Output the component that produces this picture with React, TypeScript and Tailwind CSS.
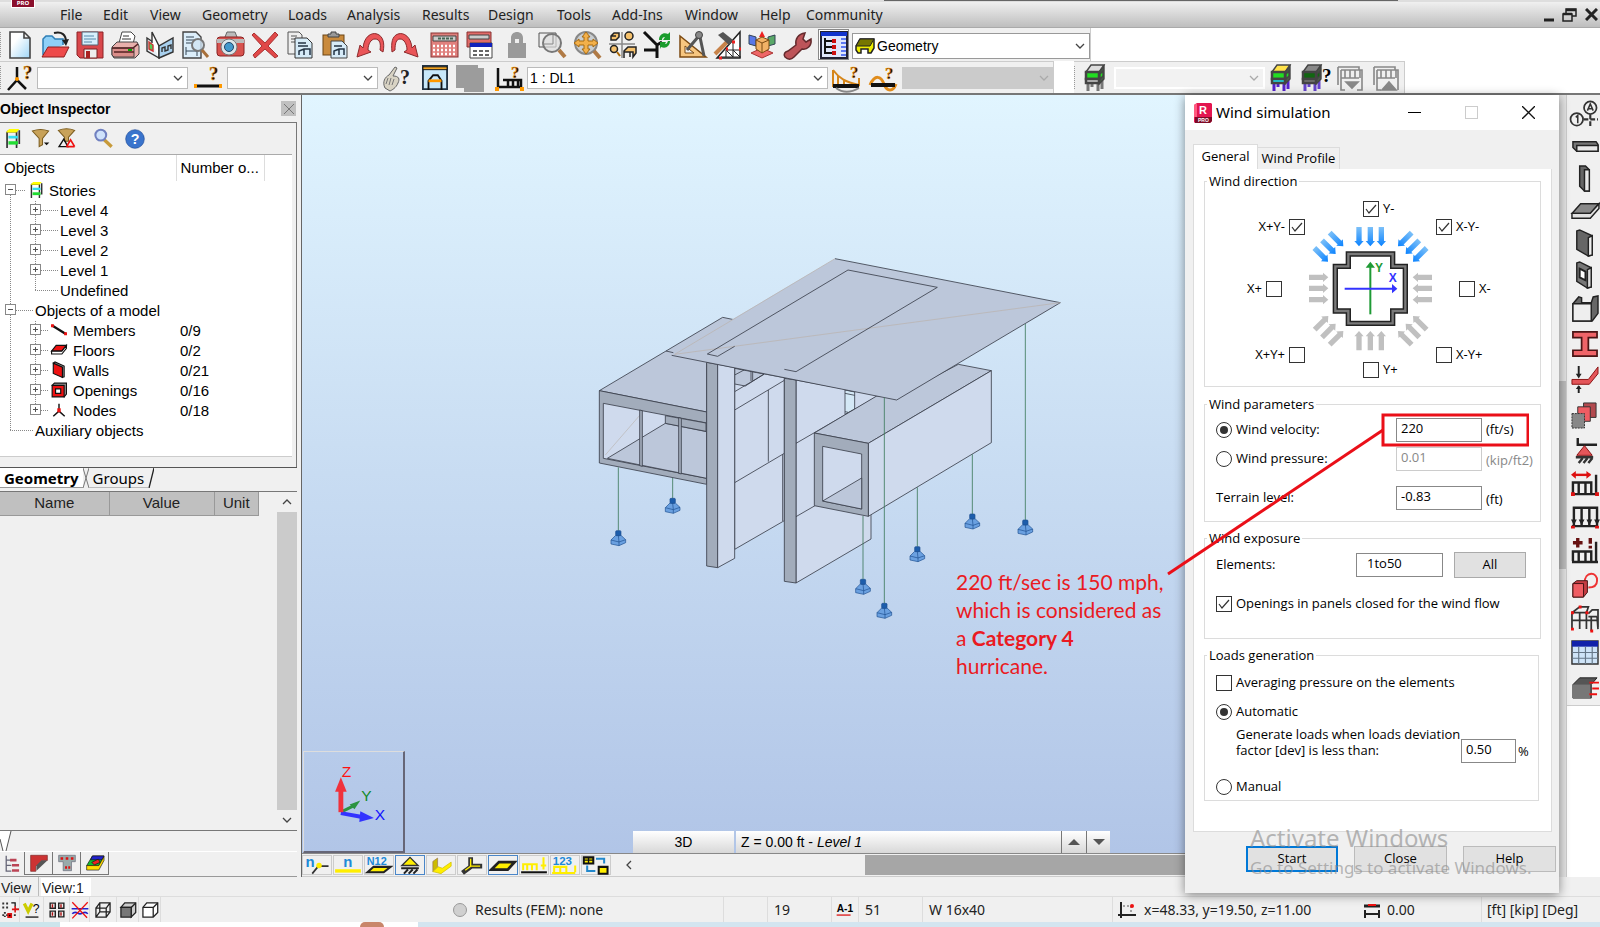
import React from "react";

// ==========================================
// DATA
// ==========================================
const menus = [
    { label: "File", width: "w-[43px]" },
    { label: "Edit", width: "w-[47px]" },
    { label: "View", width: "w-[52px]" },
    { label: "Geometry", width: "w-[86px]" },
    { label: "Loads", width: "w-[59px]" },
    { label: "Analysis", width: "w-[75px]" },
    { label: "Results", width: "w-[66px]" },
    { label: "Design", width: "w-[69px]" },
    { label: "Tools", width: "w-[55px]" },
    { label: "Add-Ins", width: "w-[73px]" },
    { label: "Window", width: "w-[75px]" },
    { label: "Help", width: "w-[46px]" },
    { label: "Community", width: "w-[90px]" },
];

type Row = { label: string; level: number; box?: "+" | "-"; icon?: string; count?: string; last?: boolean; top?: boolean };

const treeRows: Row[] = [
    { label: "Stories", level: 0, box: "-", icon: "stories", top: true },
    { label: "Level 4", level: 1, box: "+" },
    { label: "Level 3", level: 1, box: "+" },
    { label: "Level 2", level: 1, box: "+" },
    { label: "Level 1", level: 1, box: "+" },
    { label: "Undefined", level: 1, last: true },
    { label: "Objects of a model", level: 0, box: "-" },
    { label: "Members", level: 1, box: "+", icon: "member", count: "0/9" },
    { label: "Floors", level: 1, box: "+", icon: "floor", count: "0/2" },
    { label: "Walls", level: 1, box: "+", icon: "wall", count: "0/21" },
    { label: "Openings", level: 1, box: "+", icon: "opening", count: "0/16" },
    { label: "Nodes", level: 1, box: "+", icon: "node", count: "0/18", last: true },
    { label: "Auxiliary objects", level: 0, last: true },
];

// ==========================================
// ICONS (28 x 28 grid)
// ==========================================
const qmark = (x: number, y: number, size = 19) => (
    <text x={x} y={y} fontSize={size} fontWeight="bold" fontFamily="Liberation Serif, serif" fill="#111" stroke="#f90" strokeWidth="0.5">?</text>
);

const stories = (roof: string, mid: string, low: string, leg: string) => (
    <g stroke="#444" strokeWidth="1.4">
        <path d="M7 19v8M17 19v8M21 15v10M11 18v5" fill="none" stroke={leg} strokeWidth="3" />
        <path d="M18 8l5-6v13l-5 5z" fill="#4a5a4a" />
        <path d="M5 8 10 1h13l-5 7z" fill={roof} />
        <path d="M5 8h13v7H5z" fill={mid} strokeWidth="2.5" />
        <path d="M5 15h13v4H5z" fill={low} strokeWidth="2.5" />
        <path d="M19 10l3-3v5l-3 3z" fill={mid} />
    </g>
);

const icons: Record<string, React.ReactNode> = {
    new: <path d="M4 1h14l6 6v20H4zM18 1v6h6" fill="url(#page)" stroke="#444" strokeWidth="1.6" />,
    open: <g><path d="M2 24V8l3-3h6l3 3h8v6" fill="#8fd0f7" stroke="#2d7db5" strokeWidth="1.5" /><path d="M1 26 7 16h21l-5 10z" fill="#ee4a4a" stroke="#8d1f1f" /><path d="M13 2c8-2 12 2 12 9" fill="none" stroke="#222" strokeWidth="2" /><path d="m21 9 4 6 3-7z" fill="#222" /></g>,
    save: <g><path d="M1 1h26v26H4l-3-3z" fill="#d9474b" stroke="#8b2226" /><path d="M6 1h16v13H6z" fill="#d7effc" stroke="#567" /><path d="M8 5h10M8 8h12M8 11h8" stroke="#58a" /><path d="M8 18h13v9H8z" fill="#eee" stroke="#722" /><path d="M10 20h4v7h-4z" fill="#a22" /></g>,
    print: <g stroke="#444"><path d="M8 12 11 1h9l4 4-2 8z" fill="#fff" /><path d="M12 5h6M11 8h9" stroke="#333" /><path d="M1 16l5-5h20l2 4v8l-4 4H3l-2-3z" fill="#e8b0ac" /><path d="M1 17h22v9H3l-2-2z" fill="#d98d89" /><path d="M1 17h21l5-4M3 21h20" fill="none" stroke="#522" strokeWidth="1.6" /><path d="M17 19h4" stroke="#0a0" strokeWidth="2" /></g>,
    book: <g stroke="#333" strokeWidth="1.4"><path d="M13 27 1 20V7l12 8z" fill="#e8f0f5" /><path d="M13 27V15L6 1v11" fill="#fff" /><path d="M13 27l14-6V7l-14 8z" fill="#a8d0ee" /><path d="M16 21v-4l3-1v4l3-1v-4l3-1v4" fill="none" /><path d="M3 11l4 3v6l-4-2z" fill="#5c5" stroke="#c33" /></g>,
    preview: <g><path d="M2 1h13l5 5v21H2z" fill="#dceefa" stroke="#444" strokeWidth="1.4" /><path d="M5 6h8M5 9h9M5 12h6M5 16v8M5 20h11v5" stroke="#345" fill="none" /><circle cx="17" cy="14" r="6" fill="#cfe4f2" fillOpacity=".8" stroke="#777" strokeWidth="2" /><path d="m21 19 6 7" stroke="#a8703a" strokeWidth="3" /></g>,
    camera: <g><path d="M9 6 11 1h8l2 5" fill="#bbb" stroke="#666" /><rect x="1" y="6" width="27" height="19" rx="3" fill="#d8524e" stroke="#822" /><path d="M1 10h27" stroke="#bbb" strokeWidth="4" /><circle cx="13" cy="16" r="8" fill="#dde6ea" stroke="#777" /><circle cx="13" cy="16" r="4.5" fill="#49c" stroke="#246" /></g>,
    delete: <path d="M3 2 14 12 24 1l3 3-10 11 10 10-3 2-10-9L4 27l-2-3 9-9L1 4z" fill="#e04848" stroke="#a33" />,
    copy: <g stroke="#555"><path d="M2 1h11l3 3v19H2z" fill="#eee" /><path d="M5 5h6M5 8h6M5 11h4" /><path d="M9 7h12l5 5v15H9z" fill="#d6ebf8" stroke="#333" /><path d="M12 12h8M12 15h10M13 24v-4l5-2h6v6M18 18v6" stroke="#234" fill="none" strokeWidth="1.5" /></g>,
    paste: <g><rect x="2" y="4" width="21" height="20" fill="#c98a3c" stroke="#6b4414" /><path d="M7 6V3h3V1h5v2h3v3z" fill="#999" stroke="#444" /><path d="M10 10h11l5 5v12H10z" fill="#d6ebf8" stroke="#444" /><path d="M13 15h8M13 24v-4l5-2h5v6M18 18v6" fill="none" stroke="#234" strokeWidth="1.5" /></g>,
    undo: <path d="M1 26 4 14l3 3C8 6 15 1 21 3c6 2 8 9 6 18l-3-2c1-6 0-11-5-11-4 0-7 5-7 11l3 2z" fill="#ea5558" stroke="#8c2b2d" />,
    redo: <path d="M27 26 24 14l-3 3C20 6 13 1 7 3 1 5 0 12 1 21l3-2C4 13 5 8 9 8c4 0 7 5 7 11l-3 2z" fill="#ea5558" stroke="#8c2b2d" />,
    calc: <g><rect x="1" y="2" width="27" height="24" fill="#e0807d" stroke="#833" /><path d="M3 5h23v5H3z" fill="#ccc" stroke="#444" /><path d="M8 7.5h16" stroke="#465" strokeWidth="2" strokeDasharray="3 1" /><path d="M3 15h23M3 19h23M3 23h23" stroke="#fff" strokeWidth="2.5" strokeDasharray="2 2" /></g>,
    calcTable: <g><path d="M2 1h24v15H2z" fill="#e06b68" stroke="#833" /><path d="M4 4h20v4H4z" fill="#ccc" stroke="#444" /><path d="M5 12h22v15H5z" fill="#fff" stroke="#444" /><path d="M5 12h22v4H5z" fill="#1122bb" /><path d="M8 20h17M8 24h17" stroke="#666" strokeWidth="2" strokeDasharray="4 2" /></g>,
    lock: <g><path d="M5 27V12h3V7c0-8 12-8 12 0v5h3v15z" fill="#9a9a9a" /><path d="M12 12V8h4v4z" fill="#eee" /></g>,
    zoom: <g><path d="M1 2h17v14H1z" fill="#eee" stroke="#555" /><circle cx="14" cy="12" r="9" fill="#ddd" fillOpacity=".7" stroke="#777" strokeWidth="2" /><path d="M4 13h11V4" fill="none" stroke="#888" /><path d="m21 19 6 7" stroke="#b07a45" strokeWidth="4" /></g>,
    pan: <g><circle cx="13" cy="12" r="11" fill="#c9cdd0" stroke="#888" strokeWidth="2" /><path d="m13 1 4 5h-2v4h5V8l5 4-5 4v-2h-5v4h2l-4 5-4-5h2v-4H6v2l-5-4 5-4v2h5V6H9z" fill="#f3b04a" stroke="#a66a11" /><path d="m21 20 6 7" stroke="#b07a45" strokeWidth="4" /></g>,
    views: <g fill="none" stroke="#222" strokeWidth="1.5"><path d="M14 1v26M1 13h26" stroke="#888" /><path d="M3 5l3-3h5v4l-3 3H3zM3 5h5" fill="#f5c16c" /><circle cx="21" cy="5" r="4" fill="#f5c16c" /><circle cx="6" cy="18" r="3.5" fill="#f5c16c" /><path d="m9 21 3 4" stroke="#a60" strokeWidth="2" /><path d="M16 20l4-4h8v6l-3 4v-5h-9zM16 20v7M22 21v5" fill="#f5c16c" /></g>,
    axis: <g><path d="M1 1 14 14v13M1 19h13M14 14l5-3" fill="none" stroke="#111" strokeWidth="3" /><path d="M16 9c0-6 5-8 9-6l2-2v8h-7l2-3c-2 0-3 1-3 3zM27 10c0 5-4 8-9 6l-1 2v-7h6l-1 2c2 0 2-1 3-3z" fill="#1a9c2c" /></g>,
    compass: <g><path d="M2 5v21h26z" fill="#f7c680" stroke="#7c4a12" strokeWidth="1.5" /><path d="M7 15v7h9z" fill="#eee" stroke="#7c4a12" /><path d="M20 6 9 19M22 6l4 19" stroke="#555" strokeWidth="3" /><circle cx="21" cy="4" r="3.5" fill="#888" stroke="#444" /></g>,
    hammer: <g><path d="M27 1v26H4z" fill="#fff" stroke="#222" strokeWidth="1.5" /><path d="M13 26v-7h14M20 26V10M8 26h20M13 19l7 7M20 19l7 7" stroke="#222" fill="none" /><path d="m2 23 13-13" stroke="#c8834a" strokeWidth="4" /><path d="m5 4 5-3 10 8-4 5z" fill="#555" /><path d="M6 27h3M13 18h2M19 11h3M26 18h2" stroke="#e22" strokeWidth="3" /></g>,
    cube: <g><path d="M1 4l7 2v9l-7-2z" fill="#5a78e8" stroke="#345" /><path d="M27 4l-7 2v9l7-2z" fill="#5aa868" stroke="#345" /><path d="M14 0l-3 6h6z" fill="#e22" /><path d="M3 22l11-5 11 5-11 5z" fill="#e66" stroke="#a33" /><path d="M8 9l6-3 7 3v9l-7 4-6-4z" fill="#f2b266" stroke="#7b4a12" /><path d="M8 9l6 3v10M14 12l7-3" stroke="#7b4a12" fill="none" /></g>,
    wrench: <path d="M2 26c-2-3 0-5 3-6l8-6c-1-6 2-11 9-12l-2 6 3 3 5-3c1 7-4 11-9 10l-8 8c-3 3-6 3-9 0z" fill="#bd5459" stroke="#642a2d" strokeWidth="1.5" />,
    inspector: <g><path d="M1 1h26v26H1z" fill="#dfe7fb" stroke="#223" strokeWidth="2" /><path d="M1 1h26v4H1z" fill="#1133cc" /><path d="M5 7v16M5 10h7M5 16h7M5 22h7" stroke="#111" strokeWidth="2" fill="none" /><path d="M12 10h4M12 16h4M12 22h4" stroke="#c11" strokeWidth="4" /><path d="M21 8h5M21 12h5M21 16h5M21 20h5M21 24h5" stroke="#35e" strokeWidth="1.5" /></g>,
    nodeAsk: <g><path d="M11 3v13L2 26M11 16l9 9" fill="none" stroke="#111" strokeWidth="2.5" /><circle cx="11" cy="15" r="2" fill="#f90" />{qmark(17, 15)}</g>,
    barAsk: <g><path d="M2 22h24" stroke="#111" strokeWidth="3" /><path d="M0 20h3v4H0zM25 20h3v4h-3z" fill="#f90" />{qmark(15, 16)}</g>,
    handAsk: <g><path d="M3 24c-3-6 0-11 4-13l6-8 2 1-4 8c6 0 7 3 5 7-2 5-6 7-8 8z" fill="#d8d3c4" stroke="#666" /><path d="M6 14l-2 6M9 14l-2 7M12 15l-2 6" stroke="#777" /><text x="18" y="20" fontSize="20" fontWeight="bold" fontFamily="Liberation Serif, serif" fill="#222">?</text></g>,
    frame: <g><path d="M1 1h26v25H1z" fill="#c8e8fa" stroke="#234" strokeWidth="2" /><path d="M1 2h26v3H1z" fill="#f5a623" stroke="#111" /><path d="M7 27V17l5-6h5l4 6v10" fill="none" stroke="#111" strokeWidth="2" /><path d="M7 17h14" stroke="#f90" strokeWidth="3" /></g>,
    grayPage: <path d="M0 1h22v3h6v24H8v-4H0z" fill="#9c9c9c" />,
    loadAsk: <g><path d="M3 4v19h24M8 16h18v7M13 16v7M18 16v7M23 16v7" fill="none" stroke="#111" strokeWidth="2.5" /><path d="M0 23h4v4H0zM25 23h4v4h-4z" fill="#f90" />{qmark(16, 14, 17)}</g>,
    diagAsk: <g><path d="M1 6c6 8 12 12 26 15v-7M1 6v17M6 12v9M12 16v5" fill="none" stroke="#d6861a" strokeWidth="2" /><path d="M1 22h26" stroke="#111" strokeWidth="4" /><path d="M4 24c8 6 16 4 23 0" stroke="#888" fill="none" strokeWidth="2" />{qmark(18, 14, 17)}</g>,
    waveAsk: <g><path d="M1 21C6 10 12 12 15 20s9 8 12 0" fill="none" stroke="#e08c1c" strokeWidth="3" /><path d="M2 21h24" stroke="#111" strokeWidth="4" />{qmark(16, 15, 17)}</g>,
    storyGray: stories("#ddd", "#2d2", "#ccc", "#777"),
    storyColor: stories("#ffe24a", "#2d2", "#1de0ee", "#52c"),
    storyAsk: <g transform="translate(-3)">{stories("#888", "#161", "#777", "#64c")}<text x="24" y="18" fontSize="19" fontWeight="bold" fontFamily="Liberation Serif, serif">?</text></g>,
    tableDown: <g stroke="#888" strokeWidth="1.6" fill="none"><path d="M2 3h21v3M2 3v18M5 6h21v20h-5M5 6v20h4M9 6v8M14 6v8M19 6v8M24 6v8M5 14h18" /><path d="M10 18h12l-6 6z" fill="#888" /></g>,
    tableUp: <g stroke="#888" strokeWidth="1.6" fill="none"><path d="M2 3h21v3M2 3v18M5 6h21v20M5 6v20h4M9 6v8M14 6v8M19 6v8M24 6v8M5 14h18" /><path d="M10 26h14l-7-8z" fill="#888" /></g>,

    // object tree
    stories: <g><path d="M6 4h14v24M6 4v24M24 2v20" fill="none" stroke="#333" strokeWidth="2.5" /><path d="M5 4l4-4h15l-4 5H5z" fill="#ff0" /><path d="M8 10h14v4H8z" fill="#3de" /><path d="M8 18h14v5H8z" fill="#2d3" /></g>,
    member: <g><path d="m2 6 24 15" stroke="#111" strokeWidth="4" /><path d="M0 4h5v5H0zM23 18h5v5h-5z" fill="#e11" /></g>,
    floor: <g stroke="#111" strokeWidth="2"><path d="M1 16 9 6h18l-8 10z" fill="#e11" /><path d="M1 16v5h18l8-10V6l-8 10z" fill="#fff" /></g>,
    wall: <g stroke="#111" strokeWidth="2"><path d="M4 2l3-2 16 7v19l-3 1z" fill="#999" /><path d="M4 2l16 7v18L4 20z" fill="#e11" /></g>,
    opening: <g stroke="#111" strokeWidth="2"><path d="M2 6l4-4h21v19l-4 5z" fill="#999" /><path d="M2 6h21v20H2z" fill="#e11" /><path d="M8 12h9v8H8z" fill="#fff" /></g>,
    node: <g><path d="M14 3v13L4 25M14 16l10 9" stroke="#111" strokeWidth="2.5" fill="none" /><path d="M11 11h6v7h-6z" fill="#e11" /></g>,
    funnel: <g><path d="M2 3c8-3 16-3 24 0L17 14v9l-5 3V14z" fill="#c8a259" stroke="#7b5c1e" strokeWidth="1.5" /><path d="M19 20h8l-4 4z" fill="#111" /></g>,
    funnelNode: <g><path d="M2 2c8-3 16-3 24 0L17 12v6h-6v-6z" fill="#c8a259" stroke="#7b5c1e" strokeWidth="1.5" /><path d="M3 26 10 15 16 26z" fill="none" stroke="#111" strokeWidth="2" /><path d="M14 26l6-10 6 10M14 26h12" fill="none" stroke="#e11" strokeWidth="2.5" /></g>,
    search: <g><path d="m15 16 11 10" stroke="#c79a3a" strokeWidth="5" /><circle cx="10" cy="9" r="8" fill="#cfe2fb" stroke="#7080c0" strokeWidth="3" /></g>,
    help: <g><circle cx="14" cy="14" r="13" fill="#3a74cc" stroke="#24509c" /><text x="8" y="21" fontSize="20" fontWeight="bold" fill="#fff" fontFamily="Liberation Sans, sans-serif">?</text></g>,

    // inspector bottom tabs
    tabTree: <g><path d="M5 1v24h8M5 8h8M5 16h8" stroke="#667" strokeWidth="2" fill="none" /><path d="M11 8h10M14 16h11M14 24h11" stroke="#b45" strokeWidth="4" /></g>,
    tabSteel: <g><path d="M1 2h26v8h-9l-9 9v8H1z" fill="#c33" stroke="#722" /><path d="M27 10 10 26V18l8-8z" fill="#555" /></g>,
    tabConcrete: <g><path d="M1 2h26v10h-6v14H8V12H1z" fill="#9aa" stroke="#667" /><path d="M4 5h4v4H4zM12 5h4v4h-4zM20 5h4v4h-4zM11 19h3v4h-3zM16 19h3v4h-3z" fill="#d11" /></g>,
    tabPlate: <g stroke="#111"><path d="M1 18 10 3h18l-8 15z" fill="#1b3" /><path d="M10 3h18l-3 6H7z" fill="#22c" /><path d="m9 13 10-5 3 5-9 4z" fill="#e22" /><path d="M1 18v7h19l8-15V4l-8 14z" fill="#fd0" /></g>,

    // status bar
    nodes: <g><path d="M2 4h3M8 4h3M2 10h3M8 10h3M2 22h22M6 17v8" stroke="#333" strokeWidth="3" strokeDasharray="3 3" /><path d="M16 3h6v6M23 13h5" stroke="#111" strokeWidth="2" fill="none" /><path d="M22 8v10M17 13h11M11 20h5v5h-5z" stroke="#d11" strokeWidth="2.5" /></g>,
    vAsk: <g><path d="m2 4 6 12 6-12" fill="none" stroke="#cc0" strokeWidth="5" /><path d="M4 25h20" stroke="#111" strokeWidth="2" /><text x="15" y="18" fontSize="19" fontFamily="Liberation Sans, sans-serif">?</text></g>,
    tiles: <g fill="#eee" stroke="#222" strokeWidth="2.5"><path d="M2 2h9v9H2zM17 2h9v9h-9zM2 16h9v10H2zM17 16h9v10h-9z" /><path d="M6 4v6M21 4v6M6 18v6M21 18v6" stroke="#a11" /></g>,
    cross: <g><path d="M1 12h26M2 20c5-6 8 0 12 0s8-6 12 0" stroke="#22c" strokeWidth="2.5" fill="none" /><path d="m2 2 23 24M26 2 2 27" stroke="#e11" strokeWidth="2" /></g>,
    wire: <g fill="none" stroke="#222" strokeWidth="2"><path d="M3 11h16v14H3zM9 3h16v14H9zM3 11l6-8M19 11l6-8M19 25l6-8M3 25l6-8" /></g>,
    shade: <g stroke="#222" strokeWidth="2"><path d="M3 10l6-7h17v15l-7 7V10z" fill="#ccc" /><path d="M3 10h16v15H3z" fill="#777" /><path d="m19 10 7-7" /></g>,
    solid: <g stroke="#222" strokeWidth="2" fill="#fff"><path d="M3 10l6-7h17v15l-7 7H3z" /><path d="M3 10h16v15M19 10l7-7" fill="none" /></g>,

    // structure toolbar on the right
    gridAxes: <g fill="none" stroke="#333" strokeWidth="1.8"><circle cx="20" cy="7" r="6.5" /><circle cx="6" cy="19" r="6.5" /><path d="M13 19h15M20 14v14" strokeDasharray="5 2" strokeWidth="2.2" /><path d="M17 10 20 3l3 7M18 8h4M5 17l2-2v8" strokeWidth="1.6" /></g>,
    beam: <g stroke="#222" strokeWidth="1.5"><path d="M2 9h24l2 3v7H6l-4-4z" fill="#777" /><path d="M6 13h22v6H6z" fill="#e8e8e8" /></g>,
    column: <g stroke="#222" strokeWidth="1.5"><path d="M9 2h6l4 4v22h-5l-5-5z" fill="#666" /><path d="M14 6h5v22h-5z" fill="#e8e8e8" /></g>,
    slab: <g stroke="#222" strokeWidth="1.5"><path d="M1 17 10 7h19l-9 10z" fill="#888" /><path d="M1 17h19l9-10v5l-9 10H1z" fill="#e2e2e2" /></g>,
    wallGray: <g stroke="#222" strokeWidth="1.5"><path d="m6 2 3-1 13 6v20l-4 1-12-7z" fill="#666" /><path d="m18 9 4-2v20l-4 1z" fill="#eee" /></g>,
    wallHole: <g stroke="#222" strokeWidth="1.5"><path d="m6 2 3-1 12 6v20l-4 1-11-7z" fill="#777" /><path d="m9 8 6 3v9l-6-3z" fill="#fff" strokeWidth="2" /><path d="m17 9 4-2v20l-4 1z" fill="#ddd" /></g>,
    core: <g stroke="#222" strokeWidth="1.5"><path d="M2 9 8 2l3 1v5h10l2-6 5-1v18l-6 8H2z" fill="#666" /><path d="M2 9h19v18H2z" fill="#eee" /></g>,
    ibeam: <path d="M2 2h25v6h-9v13h9v6H2v-6h9V8H2z" fill="#ef6468" stroke="#4a1515" strokeWidth="1.8" />,
    thickness: <g><path d="M1 15h17L28 2v7l-9 11H1z" fill="#e4565a" stroke="#811" /><path d="M8 1v10M8 29v-7" stroke="#222" strokeWidth="2" /><path d="m5 9 3 5 3-5zM5 25l3-4 3 4z" fill="#222" /></g>,
    layers: <g stroke="#333"><path d="M13 1h13v15H13z" fill="#b24a4f" /><path d="M7 5h13v15H7z" fill="#ef5d63" /><path d="M1 12h13v15H1z" fill="#888" strokeDasharray="2 1" /></g>,
    pinned: <g><path d="M7 1v7h20" fill="none" stroke="#222" strokeWidth="2.5" /><path d="m14 9 8 10H6z" fill="#e4565a" stroke="#811" /><path d="M5 21h18M8 27l4-5M13 27l4-5M18 27l4-5" stroke="#333" strokeWidth="2.5" /></g>,
    dimLoad: <g><path d="M2 4h18" stroke="#d11" strokeWidth="2.5" /><path d="m0 4 5-4v8zM21 4l-5-4v8z" fill="#d11" /><path d="M2 23V12h19v11M8 12v11M15 12v11M26 4v19M1 24h27" stroke="#222" strokeWidth="2.5" fill="none" /><path d="M0 24h4M25 24h4" stroke="#d11" strokeWidth="4" /></g>,
    lineLoad: <g><path d="M3 24V5h24v19M11 5v19M19 5v19M1 24h27" stroke="#222" strokeWidth="2.5" fill="none" /><path d="M0 17h6l-3 6zM8 17h6l-3 6zM16 17h6l-3 6zM24 17h6l-3 6z" fill="#222" /><path d="M0 25h4M25 25h4" stroke="#d11" strokeWidth="3" /></g>,
    addLoad: <g><path d="M7 1v10M2 6h10M20 1v6M20 9v3" stroke="#611" strokeWidth="3.5" /><path d="M2 25V15h19v10M8 15v10M15 15v10M26 5v20M1 26h27" stroke="#222" strokeWidth="2.5" fill="none" /></g>,
    release: <g><path d="M14 12c0-14 14-12 13-3 0 5-4 7-9 7" fill="none" stroke="#e33" strokeWidth="2" /><path d="m2 12 4-3h11v12l-4 5H2z" fill="#c43c42" stroke="#411" /><path d="M2 12h11v14H2z" fill="#ef5d63" stroke="#411" /></g>,
    building: <g fill="none" stroke="#333" strokeWidth="1.8"><path d="M1 8l8-6h9l-2 6v17M1 8v17M1 8h15M1 16h26M9 8v17M18 9l4-4h6v18M18 12h9M21 12v15M27 12l1 13" /><path d="M0 8h3M8 2h3M15 8h3M0 25h3M20 27h3" stroke="#e11" strokeWidth="3" /></g>,
    table: <g><path d="M1 3h27v24H1z" fill="#cfe4f8" stroke="#333" strokeWidth="1.5" /><path d="M1 3h27v6H1z" fill="#1122aa" /><path d="M1 15h27M1 21h27M8 9v18M15 9v18M22 9v18" stroke="#678" strokeWidth="1.2" /></g>,
    blockLoad: <g><path d="m2 12 7-7h18l-6 7v14H2z" fill="#555" stroke="#222" /><path d="M2 12h18v14H2z" fill="#777" /><path d="M19 10h10M22 16h7M19 22h8" stroke="#e11" strokeWidth="2" /></g>,
};

// display toggles below the view, 40 x 28 grid
const blueText = { fontWeight: "bold", fill: "#2089d8", fontFamily: "Liberation Sans, sans-serif" };

const toggles: { name: string; on?: boolean; art: React.ReactNode }[] = [
    { name: "Node numbers", art: <g><text x="3" y="16" fontSize="22" {...blueText}>n</text><path d="m13 26 9-11h15" stroke="#333" strokeWidth="2.5" fill="none" /><circle cx="23" cy="14" r="4" fill="#fe0" /></g> },
    { name: "Bar numbers", art: <g><text x="13" y="16" fontSize="22" {...blueText}>n</text><path d="M1 22h38" stroke="#fe0" strokeWidth="5" /></g> },
    { name: "Panel numbers", art: <g><text x="2" y="13" fontSize="16" {...blueText}>N12</text><path d="M3 24 12 16h25l-10 8z" fill="#fe0" stroke="#222" strokeWidth="3" /></g> },
    { name: "Supports", on: true, art: <g><path d="M8 14 20 2l12 12z" fill="#fe0" stroke="#333" strokeWidth="2" /><path d="M7 18h26M11 26l6-6M18 26l6-6M25 26l6-6" stroke="#222" strokeWidth="3" /></g> },
    { name: "Profiles", art: <g><path d="M8 8 15 3v13l-7 7z" fill="#cb0" stroke="#975" /><path d="M8 23l8-7 6 2 13-9v6L20 26z" fill="#fe0" stroke="#cb0" /></g> },
    { name: "Local axes", art: <g><path d="M18 2v14l-12 9M18 15h17" fill="none" stroke="#333" strokeWidth="7" /><path d="M18 4v11h14M18 15 10 21" fill="none" stroke="#fe0" strokeWidth="2" /></g> },
    { name: "Panels", on: true, art: <path d="M3 20 14 9h23l-10 11z" fill="#fe0" stroke="#222" strokeWidth="4" /> },
    { name: "Loads", art: <g><path d="M1 24h38" stroke="#111" strokeWidth="3" /><path d="M4 21v-9h20v9M10 12v9M17 12v9M34 2v18M30 14h8" fill="none" stroke="#fe0" strokeWidth="3" /></g> },
    { name: "Load values", art: <g><text x="2" y="13" fontSize="17" {...blueText}>123</text><path d="M4 25v-9h18v9M13 16v9M1 25h34M35 14v10" fill="none" stroke="#fe0" strokeWidth="3" /></g> },
    { name: "Attributes", art: <g><path d="M2 2h14v9H2z" fill="#fe0" stroke="#111" strokeWidth="3" /><path d="M9 2v9M2 6h14" stroke="#111" strokeWidth="2" /><path d="M24 16h13v10H24z" fill="#fe0" stroke="#111" strokeWidth="3" /><path d="M20 4h12v7M7 14v8h12" fill="none" stroke="#28c" strokeWidth="3" /></g> },
];

function Icon({ name, className = "size-7" }: { name: string; className?: string }) {
    return (
        <svg viewBox="0 0 28 28" className={`shrink-0 overflow-visible ${className}`} aria-hidden="true">
            {icons[name]}
        </svg>
    );
}

function ToolButton({ name, className = "w-[35px]", icon }: { name: string; className?: string; icon?: string }) {
    return (
        <button type="button" aria-label={name} className={`flex h-full shrink-0 items-center justify-center ${className}`}>
            <Icon name={name} className={icon} />
        </button>
    );
}

function Chevron({ className = "text-[#444]", d = "m1 3 4 4 4-4" }: { className?: string; d?: string }) {
    return (
        <svg viewBox="0 0 10 10" className={`size-[10px] shrink-0 ${className}`} aria-hidden="true">
            <path d={d} fill="none" stroke="currentColor" strokeWidth="1.3" />
        </svg>
    );
}

function Combo({ label, value = "", box, disabled, chevron }: { label: string; value?: string; box: string; disabled?: boolean; chevron?: string }) {
    return (
        <div className={`relative shrink-0 ${box}`}>
            <select aria-label={label} disabled={disabled} className="block size-full appearance-none bg-transparent pl-[2px] font-['Liberation_Sans',sans-serif] text-sm text-black">
                <option>{value}</option>
            </select>
            <span className="pointer-events-none absolute inset-y-0 right-1 flex items-center">
                <Chevron className={chevron} />
            </span>
        </div>
    );
}

function Grip() {
    return <span className="my-1 w-[2px] shrink-0 self-stretch border-l border-dotted border-[#999]" />;
}

function ProLogo({ className = "" }: { className?: string }) {
    return (
        <svg viewBox="0 0 18 20" className={className} aria-hidden="true">
            <path d="M0 2 3 0h14l1 1v17l-2 2H1l-1-1z" fill="#e31650" />
            <path d="M0 2 3 0v14H0z" fill="#ff5a80" />
            <path d="M1 14h17v4l-2 2H1z" fill="#7d0a26" />
            <text x="5" y="11" fontSize="11" fontWeight="bold" fill="#fff" fontFamily="Liberation Sans, sans-serif">R</text>
            <text x="4" y="19" fontSize="5" fontWeight="bold" fill="#fff" fontFamily="Liberation Sans, sans-serif">PRO</text>
        </svg>
    );
}

// ==========================================
// HEADER
// ==========================================
function MenuBar() {
    return (
        <nav className="relative flex h-[26px] shrink-0 items-center border-b border-[#aaa] bg-linear-to-b from-[#f0f0f0] to-[#bebebe] pl-[60px] text-sm text-[#222]">
            <div className="absolute -top-[2px] left-[11px] flex h-2 w-6 items-center justify-center border border-t-0 border-white bg-[#8a0f2c] text-[6px] font-bold text-white">PRO</div>
            {menus.map((m) => (
                <button key={m.label} type="button" className={`shrink-0 text-left ${m.width}`}>
                    {m.label}
                </button>
            ))}
            <div className="ml-auto flex items-center gap-2 pr-[2px] text-[#222]">
                <svg viewBox="0 0 10 14" className="h-[14px] w-[10px]"><path d="M0 12h10" stroke="currentColor" strokeWidth="3" /></svg>
                <svg viewBox="0 0 15 14" className="h-[14px] w-[15px]" fill="none" stroke="currentColor" strokeWidth="1.5"><path d="M1 6h9v7H1zM4 5V1h10v7h-4" /><path d="M1 6h9M4 2h10" strokeWidth="2.5" /></svg>
                <svg viewBox="0 0 13 13" className="size-[13px]"><path d="m1 1 11 11M12 1 1 12" stroke="currentColor" strokeWidth="3" /></svg>
            </div>
        </nav>
    );
}

const mainTools = ["new", "open", "save", "print", "book", "preview", "camera", "delete", "copy", "paste", "undo"];
const viewTools = ["zoom", "pan", "views", "axis", "compass", "hammer", "cube", "wrench"];

function Toolbars() {
    return (
        <>
            <div className="flex h-[33px] shrink-0 bg-white">
                <div className="flex items-center border-r border-[#ccc] bg-[#f0f0f0]">
                    <Grip />
                    {mainTools.map((t) => <ToolButton key={t} name={t} />)}
                    <ToolButton name="redo" className="mr-1 w-[35px]" />
                    <ToolButton name="calc" />
                    <ToolButton name="calcTable" className="mr-[3px] w-[35px]" />
                    <ToolButton name="lock" />
                    {viewTools.map((t) => <ToolButton key={t} name={t} />)}
                    <button type="button" aria-label="Object inspector" className="ml-1 flex size-[31px] shrink-0 items-center justify-center border border-[#888] bg-white">
                        <Icon name="inspector" />
                    </button>
                    <div className="relative mt-[2px] ml-[3px] flex h-[26px] w-[238px] items-center border border-[#999] bg-white">
                        <svg viewBox="0 0 20 16" className="ml-[2px] h-4 w-5" aria-hidden="true">
                            <path d="M1 8 5 1h14v9l-3 5h-3v-4H6v4H3l-2-3z" fill="#ee0" stroke="#222" strokeWidth="1.5" />
                            <path d="M1 8 5 1h14l-4 7z" fill="#770" stroke="#222" />
                        </svg>
                        <Combo label="Layout" value="Geometry" box="h-full flex-1" />
                    </div>
                </div>
            </div>
            <div className="flex h-[34px] shrink-0 border-b-2 border-[#777] bg-white">
                <div className="flex items-center border-t border-r border-[#ccc] bg-[#f0f0f0]">
                    <Grip />
                    <ToolButton name="nodeAsk" className="w-[35px]" />
                    <Combo label="Node selection" box="h-[22px] w-[151px] border border-[#bbb] bg-white" />
                    <ToolButton name="barAsk" className="w-[39px]" />
                    <Combo label="Bar selection" box="h-[22px] w-[151px] border border-[#bbb] bg-white" />
                    <ToolButton name="handAsk" className="w-9" />
                    <ToolButton name="frame" className="ml-[3px] w-[35px]" icon="size-[26px]" />
                    <ToolButton name="grayPage" />
                    <ToolButton name="loadAsk" className="ml-[3px] w-[37px]" />
                    <Combo label="Load case" value="1 : DL1" box="h-[22px] w-[301px] border border-[#bbb] bg-white" />
                    <ToolButton name="diagAsk" />
                    <ToolButton name="waveAsk" className="w-[39px]" />
                    <Combo label="Mode" disabled box="h-[22px] w-[151px] bg-[#cbcbcb]" chevron="text-[#aaa]" />
                </div>
                <div className="ml-5 flex items-center border-t border-r border-[#ccc] bg-[#f0f0f0]">
                    <Grip />
                    <ToolButton name="storyGray" className="w-[38px]" />
                    <Combo label="Story" disabled box="h-[22px] w-[151px] border-2 border-white bg-[#f2f2f2]" chevron="text-[#aaa]" />
                    <ToolButton name="storyColor" className="w-8" />
                    <ToolButton name="storyAsk" />
                    <ToolButton name="tableDown" className="w-9" />
                    <ToolButton name="tableUp" className="w-9" />
                </div>
            </div>
        </>
    );
}

// ==========================================
// OBJECT INSPECTOR
// ==========================================
function TreeGuide({ row }: { row: Row }) {
    const x = row.level === 0 ? 10 : 35;
    const end = row.level === 0 ? (row.icon ? 26 : 33) : row.icon ? 49 : 58;
    return (
        <svg className="shrink-0" width={end} height="20" aria-hidden="true">
            <g stroke="#888" strokeDasharray="1 1">
                {row.label !== "Auxiliary objects" && <path d={`M10.5 ${row.top ? 8 : 0}V20`} />}
                {row.label === "Auxiliary objects" && <path d="M10.5 0V9" />}
                {row.level === 1 && <path d={`M35.5 0V${row.last ? 9 : 20}`} />}
                <path d={`M${x} 9.5H${end}`} />
            </g>
            {row.box && (
                <g>
                    <rect x={x - 5 + 0.5} y="3.5" width="10" height="10" fill="#fff" stroke="#888" />
                    <path d={`M${x - 2} 8.5h5`} stroke="#555" />
                    {row.box === "+" && <path d={`M${x + 0.5} 6v5`} stroke="#555" />}
                </g>
            )}
        </svg>
    );
}

function ObjectInspector() {
    return (
        <aside className="flex w-[301px] shrink-0 flex-col bg-[#f0f0f0] pr-1 font-['Liberation_Sans',sans-serif] text-[15px] text-black">
            <div className="flex h-7 shrink-0 items-center justify-between border-b border-[#777]">
                <h2 className="text-sm font-bold">Object Inspector</h2>
                <button type="button" aria-label="Close inspector" className="mr-[1px] flex size-[15px] items-center justify-center bg-[#c0c0c0]">
                    <svg viewBox="0 0 10 10" className="size-[10px]"><path d="m0 0 10 10M10 0 0 10" stroke="#777" /></svg>
                </button>
            </div>
            <div className="flex flex-col border-r border-[#777]">
                <div className="mr-1 flex h-8 items-center border-b border-[#aaa] pl-[2px]">
                    <ToolButton name="stories" className="w-5" icon="size-[19px]" />
                    <ToolButton name="funnel" className="ml-1 w-7" icon="size-[19px]" />
                    <ToolButton name="funnelNode" className="w-6" icon="size-[19px]" />
                    <ToolButton name="search" className="ml-[11px] w-7" icon="size-[19px]" />
                    <ToolButton name="help" className="ml-[2px] w-8" icon="size-5" />
                </div>
                <div className="mr-1 border-b border-[#ccc] bg-white pb-[15px]">
                    <table className="w-full table-fixed border-collapse">
                        <thead>
                            <tr className="h-[26px]">
                                <th className="w-[176px] border-r border-[#ddd] p-0 pl-1 text-left font-normal">Objects</th>
                                <th className="w-[88px] border-r border-[#ddd] p-0 pl-1 text-left font-normal">Number o...</th>
                                <th />
                            </tr>
                        </thead>
                        <tbody>
                            {treeRows.map((row) => (
                                <tr key={row.label} className="h-5 leading-5">
                                    <td className="p-0">
                                        <div className="flex h-5">
                                            <TreeGuide row={row} />
                                            {row.icon && <Icon name={row.icon} className={row.icon === "stories" ? "mr-[3px] ml-[2px] mt-[1px] size-4" : "mr-1 ml-[2px] mt-[1px] size-4"} />}
                                            <span className="pl-[2px]">{row.label}</span>
                                        </div>
                                    </td>
                                    <td className="p-0 pl-1">{row.count}</td>
                                    <td />
                                </tr>
                            ))}
                        </tbody>
                    </table>
                </div>
                <div className="h-[10px]" />
            </div>
            <div className="flex h-6 shrink-0 border-t border-[#555] font-['Noto_Sans',sans-serif] leading-5">
                <button type="button" className="h-5 border-b border-[#999] bg-white px-1 font-bold">Geometry</button>
                <svg viewBox="0 0 6 20" className="h-5 w-[6px]" aria-hidden="true"><path d="M6 0 0 20M0 0l6 20" stroke="#777" /></svg>
                <button type="button" className="h-5 border-b border-[#bbb] px-1">Groups</button>
                <svg viewBox="0 0 6 20" className="h-5 w-[6px]" aria-hidden="true"><path d="M6 0 1 20" stroke="#222" strokeWidth="1.3" /></svg>
            </div>
            <div className="flex min-h-0 flex-1 border-y border-[#777]">
                <div className="flex-1">
                    <table className="w-[259px] table-fixed border-collapse text-[#222]">
                        <thead>
                            <tr className="h-[22px] bg-[#c0c0c0]">
                                <th className="w-[109px] border-r border-b border-[#999] p-0 font-normal">Name</th>
                                <th className="w-[105px] border-r border-b border-[#999] p-0 font-normal">Value</th>
                                <th className="border-r border-b border-[#999] p-0 font-normal">Unit</th>
                            </tr>
                        </thead>
                    </table>
                </div>
                <div className="flex w-5 flex-col items-center">
                    <span className="flex h-5 items-center"><Chevron d="m1 7 4-4 4 4" /></span>
                    <span className="w-full flex-1 bg-[#cbcbcb]" />
                    <span className="flex h-5 items-center"><Chevron /></span>
                </div>
            </div>
            <div className="h-[21px] shrink-0 border-b border-white">
                <svg viewBox="0 0 12 20" className="h-5 w-3" aria-hidden="true"><path d="M0 0h11L6 20H3L0 8z" fill="#fff" /><path d="M0 8l3 12M11 0 6 20" stroke="#555" fill="none" /></svg>
            </div>
            <div className="flex h-[25px] shrink-0 border-b border-[#999] pb-[1px]">
                {["tabTree", "tabSteel", "tabConcrete", "tabPlate"].map((t, i) => (
                    <ToolButton key={t} name={t} icon="size-[18px]" className={i === 0 ? "w-[25px] border-r border-[#777]" : "w-7 border-r border-b border-[#777]"} />
                ))}
            </div>
        </aside>
    );
}

// ==========================================
// 3D VIEW
// ==========================================
const poly = (points: string, fill: string) => <polygon points={points} fill={fill} stroke="#3a3f4a" strokeWidth="2.5" strokeLinejoin="round" />;

const ROOF = "#bcc7da";
const WALL = "#cfdaed";
const EDGE = "#a2acbb";

const supports = [
    { x: 115, from: 682, to: 872 },
    { x: 278, from: 714, to: 775 },
    { x: 849, from: 828, to: 1018 },
    { x: 913, from: 473, to: 1090 },
    { x: 1012, from: 742, to: 920 },
    { x: 1177, from: 643, to: 822 },
    { x: 1336, from: 252, to: 840 },
];

function HouseModel() {
    return (
        <svg className="absolute top-[145px] left-[278px] h-[390px] w-[500px]" viewBox="0 0 1500 1170" role="img" aria-label="Structural model">
            {/* left box */}
            {poly("58,452 428,232 500,247 380,370 380,516", ROOF)}
            <path d="M258 333l22 5" stroke="#3a3f4a" strokeWidth="2.5" />
            {poly("58,452 380,516 380,733 58,669", EDGE)}
            {poly("70,490 380,549 380,715 70,655", WALL)}
            {poly("82,655 256,550 380,575 380,715", ROOF)}
            {poly("256,527 378,549 378,574 256,550", EDGE)}
            <path d="M76 645 180 525" stroke="#b9b5b2" strokeWidth="2" />
            {poly("179,510 187,512 187,679 179,677", EDGE)}
            {poly("296,533 304,535 304,702 296,700", EDGE)}

            {/* walls between the columns */}
            {poly("464,385 613,413 613,842 464,928", WALL)}
            {poly("464,385 552,402 496,438 464,432", ROOF)}
            <path d="M464 405l28-15M513 393v30M518 394v28M464 455l88-52M464 510l149-89M565 450v215M464 728l149-88M608 643v200" fill="none" stroke="#3a3f4a" strokeWidth="2.5" />
            {poly("648,420 890,465 890,600 873,826 873,897 648,1029", WALL)}
            {poly("795,450 824,456 824,507 795,523", "#d4e8f6")}
            <path d="M795 460l29 6M795 515l10 2M648 610l245-142M648 830l57-33" stroke="#3a3f4a" strokeWidth="2.5" />
            {poly("380,367 413,373 413,983 380,978", EDGE)}
            {poly("413,373 464,383 464,955 413,983", WALL)}
            {poly("613,415 648,420 648,1029 613,1024", EDGE)}

            {/* right box */}
            {poly("703,579 890,468 950,470 1135,373 1234,392 865,610", ROOF)}
            {poly("865,610 1234,392 1234,608 865,829", WALL)}
            {poly("703,579 865,610 865,829 703,797", EDGE)}
            {poly("728,619 845,642 845,807 728,783", WALL)}
            {poly("728,783 845,714 845,807", ROOF)}

            {/* roof plate */}
            <polygon points="765,56 1441,188 950,480 275,346" fill={ROOF} />
            <path d="M765 56 1441 188 950 480 275 346" fill="none" stroke="#3a3f4a" strokeWidth="2.5" />
            <path d="M765 56 284 343 865 265 1441 188" fill="none" stroke="#bab6b4" strokeWidth="2.5" />
            <path d="M464 319l-51 30-31-7L804 90l268 52-424 253-35-7" fill="none" stroke="#3a3f4a" strokeWidth="2.5" />

            {supports.map((s) => (
                <g key={s.x}>
                    <path d={`M${s.x} ${s.from}V${s.to}`} stroke="#3d7a5c" strokeWidth="2.5" />
                    <g transform={`translate(${s.x} ${s.to})`} stroke="#1c4f8f" strokeWidth="2">
                        <path d="M-8 14-22 28v12l24 5 20-9V27L8 14z" fill="#6aa0e0" />
                        <path d="M-22 28l24 6 20-7M2 34v11M0 14l2 20" fill="none" />
                        <rect x="-8" y="0" width="16" height="15" rx="3" fill="#1d5dab" />
                    </g>
                </g>
            ))}
        </svg>
    );
}

function AxisTriad() {
    return (
        <div className="absolute bottom-0 left-[1px] size-[102px] border-t border-r-2 border-b-2 border-l border-t-[#ddd] border-r-[#667] border-b-[#667] border-l-[#ddd]">
            <svg viewBox="0 0 102 102" className="size-full font-['Liberation_Sans',sans-serif]" aria-label="Axes">
                <path d="M38 62 50 56" stroke="#2c9440" strokeWidth="3" />
                <path d="m47 54 11-4-6 9z" fill="#2c9440" />
                <path d="m38 63 22 4" stroke="#33f" strokeWidth="4" />
                <path d="m58 61 14 7-15 4z" fill="#33f" />
                <path d="M38 62V36" stroke="#f0323c" strokeWidth="5" />
                <path d="m38 26 6 15H32z" fill="#f0323c" />
                <text x="39" y="26" fontSize="16" fill="#f11">Z</text>
                <text x="59" y="51" fontSize="16" fill="#118a2a">Y</text>
                <text x="73" y="70" fontSize="16" fill="#11f">X</text>
            </svg>
        </div>
    );
}

function ModelView() {
    return (
        <section className="flex min-w-0 flex-1 flex-col border-l border-[#666] bg-[#f0f0f0]">
            <div className="relative flex-1 overflow-hidden bg-linear-to-b from-[#e1f5ff] via-[#c8dcf2] to-[#b1c5e7]">
                <HouseModel />
                <AxisTriad />
                <div className="absolute bottom-0 left-[331px] flex h-[22px] font-['Liberation_Sans',sans-serif] text-sm text-black">
                    <button type="button" className="mr-[2px] w-[101px] bg-linear-to-b from-white to-[#d8d8d8]">3D</button>
                    <button type="button" className="w-[325px] bg-linear-to-b from-white to-[#d8d8d8] pl-[5px] text-left">
                        Z = 0.00 ft - <i>Level 1</i>
                    </button>
                    <button type="button" aria-label="Level up" className="flex w-[25px] items-center justify-center border-l border-[#777] bg-linear-to-b from-white to-[#d8d8d8]">
                        <svg viewBox="0 0 12 6" className="h-[6px] w-3"><path d="M0 6h12L6 0z" fill="#555" /></svg>
                    </button>
                    <button type="button" aria-label="Level down" className="flex w-6 items-center justify-center border-l border-[#777] bg-linear-to-b from-white to-[#d8d8d8]">
                        <svg viewBox="0 0 12 6" className="h-[6px] w-3"><path d="M0 0h12L6 6z" fill="#555" /></svg>
                    </button>
                </div>
            </div>
            <div className="flex h-6 shrink-0 items-center border-t border-b border-t-[#888] border-b-[#ccc]">
                {toggles.map((t) => (
                    <button key={t.name} type="button" aria-label={t.name} className={`mr-[1px] flex h-5 w-[30px] shrink-0 items-center justify-center border ${t.on ? "border-[#4a86c8]" : "border-[#ccc]"}`}>
                        <svg viewBox="0 0 40 28" className="h-[19px] w-7 shrink-0" aria-hidden="true">{t.art}</svg>
                    </button>
                ))}
                <span className="ml-3 w-6"><Chevron d="M7 1 3 5l4 4" /></span>
                <span className="ml-[217px] h-5 flex-1 bg-[#a6a6a6]" />
            </div>
        </section>
    );
}

const sideTools = [
    { name: "gridAxes", size: "h-[33px]" },
    { name: "beam", size: "h-[30px]" },
    { name: "column", size: "h-[33px]" },
    { name: "slab", size: "h-[32px]" },
    { name: "wallGray", size: "h-[32px]" },
    { name: "wallHole", size: "h-[33px]" },
    { name: "core", size: "h-[35px]" },
    { name: "ibeam", size: "h-[34px]" },
    { name: "thickness", size: "h-[37px]" },
    { name: "layers", size: "h-[36px]" },
    { name: "pinned", size: "h-[34px]" },
    { name: "dimLoad", size: "h-[34px]" },
    { name: "lineLoad", size: "h-[31px]" },
    { name: "addLoad", size: "h-[36px]" },
    { name: "release", size: "h-[35px]" },
    { name: "building", size: "h-[31px]" },
    { name: "table", size: "h-[34px]" },
    { name: "blockLoad", size: "h-[37px]" },
];

function SideToolbar() {
    return (
        <>
            <div className="flex w-[27px] shrink-0 flex-col border-r border-[#ccc] bg-[#e3e3e3] pl-[18px]">
                <div className="mt-[286px] h-[188px] bg-[#bdbdbd]" />
            </div>
            <div className="flex w-[33px] shrink-0 flex-col bg-white">
                <div className="flex flex-col border-b border-[#ccc] bg-[#f0f0f0] pt-[3px]">
                    {sideTools.map((t) => (
                        <div key={t.name} className={t.size}>
                            <ToolButton name={t.name} className="w-full pl-[1px]" icon="size-[27px]" />
                        </div>
                    ))}
                </div>
            </div>
        </>
    );
}

// ==========================================
// WIND SIMULATION DIALOG
// ==========================================
function Check({ label, checked, before }: { label: string; checked?: boolean; before?: boolean }) {
    return (
        <label className={`flex h-4 items-center gap-1 whitespace-nowrap ${before ? "flex-row-reverse" : ""}`}>
            <span className="relative flex size-4 shrink-0">
                <input type="checkbox" defaultChecked={checked} className="peer size-4 appearance-none border border-[#333] bg-white" />
                <svg viewBox="0 0 16 16" className="pointer-events-none absolute inset-0 hidden peer-checked:block"><path d="m3 8 3 4 7-8" fill="none" stroke="#333" strokeWidth="1.2" /></svg>
            </span>
            {label}
        </label>
    );
}

function Radio({ name, label, checked }: { name: string; label: string; checked?: boolean }) {
    return (
        <label className="flex h-4 items-center gap-1 whitespace-nowrap">
            <input type="radio" name={name} defaultChecked={checked} className="grid size-4 shrink-0 appearance-none place-content-center rounded-full border border-[#333] bg-white before:hidden before:size-2 before:rounded-full before:bg-[#333] checked:before:block" />
            {label}
        </label>
    );
}

function Group({ title, className = "", body, children }: { title: string; className?: string; body: string; children: React.ReactNode }) {
    return (
        <fieldset className={`border border-[#dcdcdc] ${className}`}>
            <legend className="ml-[2px] h-4 px-[2px] leading-4">{title}</legend>
            <div className={body}>{children}</div>
        </fieldset>
    );
}

function Field({ id, label, value, box = "w-[86px] pl-1", disabled }: { id?: string; label?: string; value: string; box?: string; disabled?: boolean }) {
    return (
        <input
            id={id}
            aria-label={label}
            defaultValue={value}
            disabled={disabled}
            className={`h-6 shrink-0 border bg-white pb-1 ${box} ${disabled ? "border-[#ccc] text-[#888]" : "border-[#888] text-black"}`}
        />
    );
}

const arrow = "M-8 0H8V42H14L0 58-14 42H-8z";
const blueArrows = [
    "translate(537 408)", "translate(571 408)", "translate(604 408)",
    "translate(449 425) rotate(-45)", "translate(426 448) rotate(-45)", "translate(403 471) rotate(-45)",
    "translate(695 425) rotate(45)", "translate(718 448) rotate(45)", "translate(740 471) rotate(45)",
];
const grayArrows = [
    "translate(387 559) rotate(-90)", "translate(387 592) rotate(-90)", "translate(387 626) rotate(-90)",
    "translate(756 559) rotate(90)", "translate(756 592) rotate(90)", "translate(756 626) rotate(90)",
    "translate(537 778) rotate(180)", "translate(571 778) rotate(180)", "translate(604 778) rotate(180)",
    "translate(404 716) rotate(-135)", "translate(426 739) rotate(-135)", "translate(449 761) rotate(-135)",
    "translate(740 716) rotate(135)", "translate(718 739) rotate(135)", "translate(695 761) rotate(135)",
];
const plan = "M505 489H638V526H676V660H638V697H505V660H466V526H505z";

function WindRose() {
    return (
        <svg viewBox="384 405 375 375" className="size-[125px]" aria-hidden="true">
            <defs>
                <linearGradient id="wind" x1="0" y1="0" x2="0" y2="1">
                    <stop offset="0" stopColor="#7cc0f8" />
                    <stop offset="1" stopColor="#0a82ff" />
                </linearGradient>
            </defs>
            {blueArrows.map((t) => <path key={t} d={arrow} transform={t} fill="url(#wind)" />)}
            {grayArrows.map((t) => <path key={t} d={arrow} transform={t} fill="#c0c0c0" />)}
            <path d={plan} fill="#fff" stroke="#222" strokeWidth="16" />
            <path d={plan} fill="none" stroke="#7a7a7a" strokeWidth="7" />
            <path d="M571 670V525" stroke="#1f9a35" strokeWidth="6" />
            <path d="m571 512 14 18h-28z" fill="#1f9a35" />
            <path d="M494 593H640" stroke="#33f" strokeWidth="6" />
            <path d="m652 593-16 14v-28z" fill="#33f" />
            <text x="585" y="542" fontSize="36" fontWeight="bold" fill="#1f9a35" fontFamily="Liberation Sans, sans-serif">Y</text>
            <text x="626" y="574" fontSize="36" fontWeight="bold" fill="#33f" fontFamily="Liberation Sans, sans-serif">X</text>
        </svg>
    );
}

function WindDialog() {
    return (
        <div role="dialog" aria-label="Wind simulation" className="absolute top-0 right-[41px] w-[374px] bg-[#f0f0f0] pb-[21px] font-['Open_Sans',sans-serif] text-[13px] text-black shadow-[0_2px_10px_rgba(0,0,0,0.45)]">
            <div className="flex h-[35px] items-center bg-white pr-6 pl-[9px]">
                <ProLogo className="h-5 w-[18px]" />
                <h2 className="ml-1 font-['Noto_Sans',sans-serif] text-[15px]">Wind simulation</h2>
                <div className="ml-auto flex items-center gap-[44px]">
                    <button type="button" aria-label="Minimize" className="flex h-[13px] w-[13px] items-center"><span className="h-px w-full bg-black" /></button>
                    <button type="button" aria-label="Maximize" className="size-[13px] border border-[#ccc]" />
                    <button type="button" aria-label="Close window"><svg viewBox="0 0 13 13" className="size-[13px]"><path d="m0 0 13 13M13 0 0 13" stroke="#111" strokeWidth="1.3" /></svg></button>
                </div>
            </div>

            <div className="pr-[7px] pl-2">
                <div role="tablist" className="flex items-end pt-[14px]">
                    <button type="button" role="tab" aria-selected="true" className="h-[25px] w-[65px] border border-b-0 border-[#dcdcdc] bg-white">General</button>
                    <button type="button" role="tab" aria-selected="false" className="h-[22px] w-[82px] border border-b-0 border-l-0 border-[#dcdcdc]">Wind Profile</button>
                </div>

                <div className="h-[663px] border border-t-0 border-[#dcdcdc] bg-white px-[10px] pt-1">
                    <Group title="Wind direction" className="h-[214px]" body="flex">
                        <div className="flex w-[100px] flex-col items-end pt-[30px]">
                            <Check label="X+Y-" checked before />
                            <div className="pt-[46px] pr-[23px]"><Check label="X+" before /></div>
                            <div className="pt-[50px]"><Check label="X+Y+" before /></div>
                        </div>
                        <div className="flex w-[131px] flex-col pt-3">
                            <div className="pl-[58px]"><Check label="Y-" checked /></div>
                            <div className="pt-[9px] pb-[11px] pl-[3px]"><WindRose /></div>
                            <div className="pl-[58px]"><Check label="Y+" /></div>
                        </div>
                        <div className="flex flex-col items-start pt-[30px]">
                            <Check label="X-Y-" checked />
                            <div className="pt-[46px] pl-[23px]"><Check label="X-" /></div>
                            <div className="pt-[50px]"><Check label="X-Y+" /></div>
                        </div>
                    </Group>

                    <Group title="Wind parameters" className="mt-[9px]" body="pt-1 pb-[9px] pl-[11px]">
                        <div className="flex h-7 items-center">
                            <div className="w-[180px]"><Radio name="wind" label="Wind velocity:" checked /></div>
                            <Field label="Wind velocity" value="220" />
                            <span className="ml-1">(ft/s)</span>
                        </div>
                        <div className="mt-[1px] flex h-7 items-center">
                            <div className="w-[180px]"><Radio name="wind" label="Wind pressure:" /></div>
                            <Field label="Wind pressure" value="0.01" disabled />
                            <span className="ml-1 pt-1 text-[#888]">(kip/ft2)</span>
                        </div>
                        <div className="mt-[11px] flex h-7 items-center">
                            <label className="w-[180px]" htmlFor="terrain">Terrain level:</label>
                            <Field id="terrain" value="-0.83" />
                            <span className="ml-1 pt-1">(ft)</span>
                        </div>
                    </Group>

                    <Group title="Wind exposure" className="mt-2" body="pt-[6px] pb-[26px] pl-[11px]">
                        <div className="flex h-[26px] items-center">
                            <label className="w-[140px]" htmlFor="elements">Elements:</label>
                            <Field id="elements" value="1to50" box="w-[87px] pl-[10px]" />
                            <button type="button" className="ml-[11px] h-[26px] w-[72px] border border-[#aaa] bg-[#e1e1e1]">All</button>
                        </div>
                        <div className="pt-[18px]"><Check label="Openings in panels closed for the wind flow" checked /></div>
                    </Group>

                    <Group title="Loads generation" className="mt-2 mr-[2px]" body="pt-3 pb-[5px] pl-[11px]">
                        <Check label="Averaging pressure on the elements" />
                        <div className="pt-[13px]"><Radio name="gen" label="Automatic" checked /></div>
                        <div className="flex h-[43px] items-end pt-[6px] pl-5">
                            <label htmlFor="deviation" className="h-full w-[225px] leading-4 whitespace-nowrap">
                                Generate loads when loads deviation
                                <br />
                                factor [dev] is less than:
                            </label>
                            <Field id="deviation" value="0.50" box="w-[55px] pl-1" />
                            <span className="ml-[2px] h-6 leading-6">%</span>
                        </div>
                        <div className="pt-4"><Radio name="gen" label="Manual" /></div>
                    </Group>
                </div>
            </div>

            <div className="flex gap-4 pt-[14px] pl-[61px]">
                <button type="button" className="h-[26px] w-[92px] border-2 border-[#0078d7] bg-[#e1e1e1]">Start</button>
                <button type="button" className="h-[26px] w-[93px] border border-[#bbb] bg-[#e1e1e1]">Close</button>
                <button type="button" className="h-[26px] w-[93px] border border-[#bbb] bg-[#e1e1e1]">Help</button>
            </div>
            <div className="pointer-events-none absolute top-[725px] left-[65px] font-['Noto_Sans',sans-serif] whitespace-nowrap text-[#8a8a8a]/60">
                <p className="text-2xl leading-9">Activate Windows</p>
                <p className="text-[17px] leading-6">Go to Settings to activate Windows.</p>
            </div>
        </div>
    );
}

// red callout that points at the wind velocity
function Callout() {
    return (
        <div className="pointer-events-none absolute top-[311px] right-[71px] h-[300px] w-[574px]">
            <svg viewBox="0 0 574 300" className="absolute inset-0" aria-hidden="true">
                <path d="M213 168 428 24" stroke="#ea0f18" strokeWidth="3" />
                <rect x="428" y="9" width="145" height="30" fill="none" stroke="#ea0f18" strokeWidth="3" />
            </svg>
            <p className="absolute top-[162px] left-0 pl-[1px] font-['Lato',sans-serif] text-[21px] leading-7 text-[#ea1a22]">
                220 ft/sec is 150 mph,
                <br />
                which is considered as
                <br />a <b>Category 4</b>
                <br />
                hurricane.
            </p>
        </div>
    );
}

// ==========================================
// STATUS BAR
// ==========================================
function StatusBar() {
    return (
        <footer className="shrink-0 text-sm text-[#222]">
            <div className="flex h-5 items-center border-b border-[#ddd] bg-[#f0f0f0] font-['Liberation_Sans',sans-serif]">
                <span className="h-full w-[39px] border-r border-[#bbb] pl-[1px] leading-[22px]">View</span>
                <span className="ml-[2px] h-[18px] w-[50px] bg-white pl-[1px] leading-5">View:1</span>
            </div>
            <div className="flex h-[25px] items-center bg-[#f0f0f0] *:shrink-0">
                <ToolButton name="nodes" className="w-5 border-r border-[#ddd]" icon="size-[18px]" />
                <ToolButton name="vAsk" className="w-6 border-r border-[#ddd]" icon="size-[18px]" />
                <ToolButton name="tiles" className="w-[26px] border-r border-[#ddd]" icon="size-4" />
                <ToolButton name="cross" className="w-5 border-r border-[#ddd]" icon="size-[18px]" />
                <ToolButton name="wire" className="w-[27px] border-r border-[#ddd]" icon="size-[18px]" />
                <ToolButton name="shade" className="w-[22px] border-r border-[#ddd]" icon="size-[18px]" />
                <ToolButton name="solid" className="w-[22px] border-r border-[#ddd]" icon="size-[18px]" />
                <span className="ml-[292px] size-[14px] rounded-full border border-[#999] bg-[#d0d0d0]" />
                <span className="ml-2 w-[248px]">Results (FEM): none</span>
                <span className="h-full w-[45px] border-x border-[#ddd]" />
                <span className="w-[63px] pl-[6px]">19</span>
                <svg viewBox="0 0 28 20" className="h-full w-7 border-x border-[#ddd]" aria-label="Section"><text x="5" y="13" fontSize="11" fontWeight="bold" fontFamily="Liberation Sans, sans-serif">A-1</text><path d="M5 16h15" stroke="#d22" strokeWidth="1.5" /></svg>
                <span className="w-[63px] pl-[6px]">51</span>
                <span className="flex h-full w-[191px] items-center border-x border-[#ddd] pl-[6px]">W 16x40</span>
                <svg viewBox="0 0 18 18" className="ml-[5px] size-[18px]" aria-hidden="true"><path d="M3 1v16M0 14h18" stroke="#222" strokeWidth="2" /><path d="M5 5h8v8" fill="none" stroke="#555" strokeDasharray="2 2" /><circle cx="14" cy="5" r="2" fill="#e11" /></svg>
                <span className="ml-2 w-[214px]">x=48.33, y=19.50, z=11.00</span>
                <svg viewBox="0 0 18 18" className="ml-[5px] size-[18px]" aria-hidden="true"><path d="M1 5h16" stroke="#222" strokeWidth="3" /><path d="M5 4h8" stroke="#e11" strokeWidth="2" /><path d="M2 9v8M16 9v8M2 13h14" stroke="#222" strokeWidth="2" /></svg>
                <span className="ml-[6px] w-[94px]">0.00</span>
                <span className="flex h-full items-center border-l border-[#ddd] pl-[5px]">[ft] [kip] [Deg]</span>
            </div>
            <div className="flex h-[5px] bg-[#d3e5f0]">
                <div className="w-[60px] bg-[#cce5ec]" />
                <div className="w-[358px] bg-white pl-[300px]"><div className="h-[5px] w-6 rounded-t-full bg-[#c9866a]" /></div>
            </div>
        </footer>
    );
}

export default function App() {
    return (
        <div className="flex h-screen flex-col overflow-hidden bg-white font-['Noto_Sans',sans-serif]">
            <svg className="absolute size-0" aria-hidden="true">
                <linearGradient id="page" x1="0" y1="0" x2="1" y2="1">
                    <stop offset="0.3" stopColor="#fff" />
                    <stop offset="1" stopColor="#9fd6f7" />
                </linearGradient>
            </svg>
            <div className="flex h-[2px] shrink-0 justify-end bg-[#dedede] pr-[202px]">
                <div className="h-px w-[514px] bg-[#666]" />
            </div>
            <MenuBar />
            <Toolbars />
            <main className="relative flex min-h-0 flex-1">
                <ObjectInspector />
                <ModelView />
                <SideToolbar />
                <WindDialog />
                <Callout />
            </main>
            <StatusBar />
        </div>
    );
}
